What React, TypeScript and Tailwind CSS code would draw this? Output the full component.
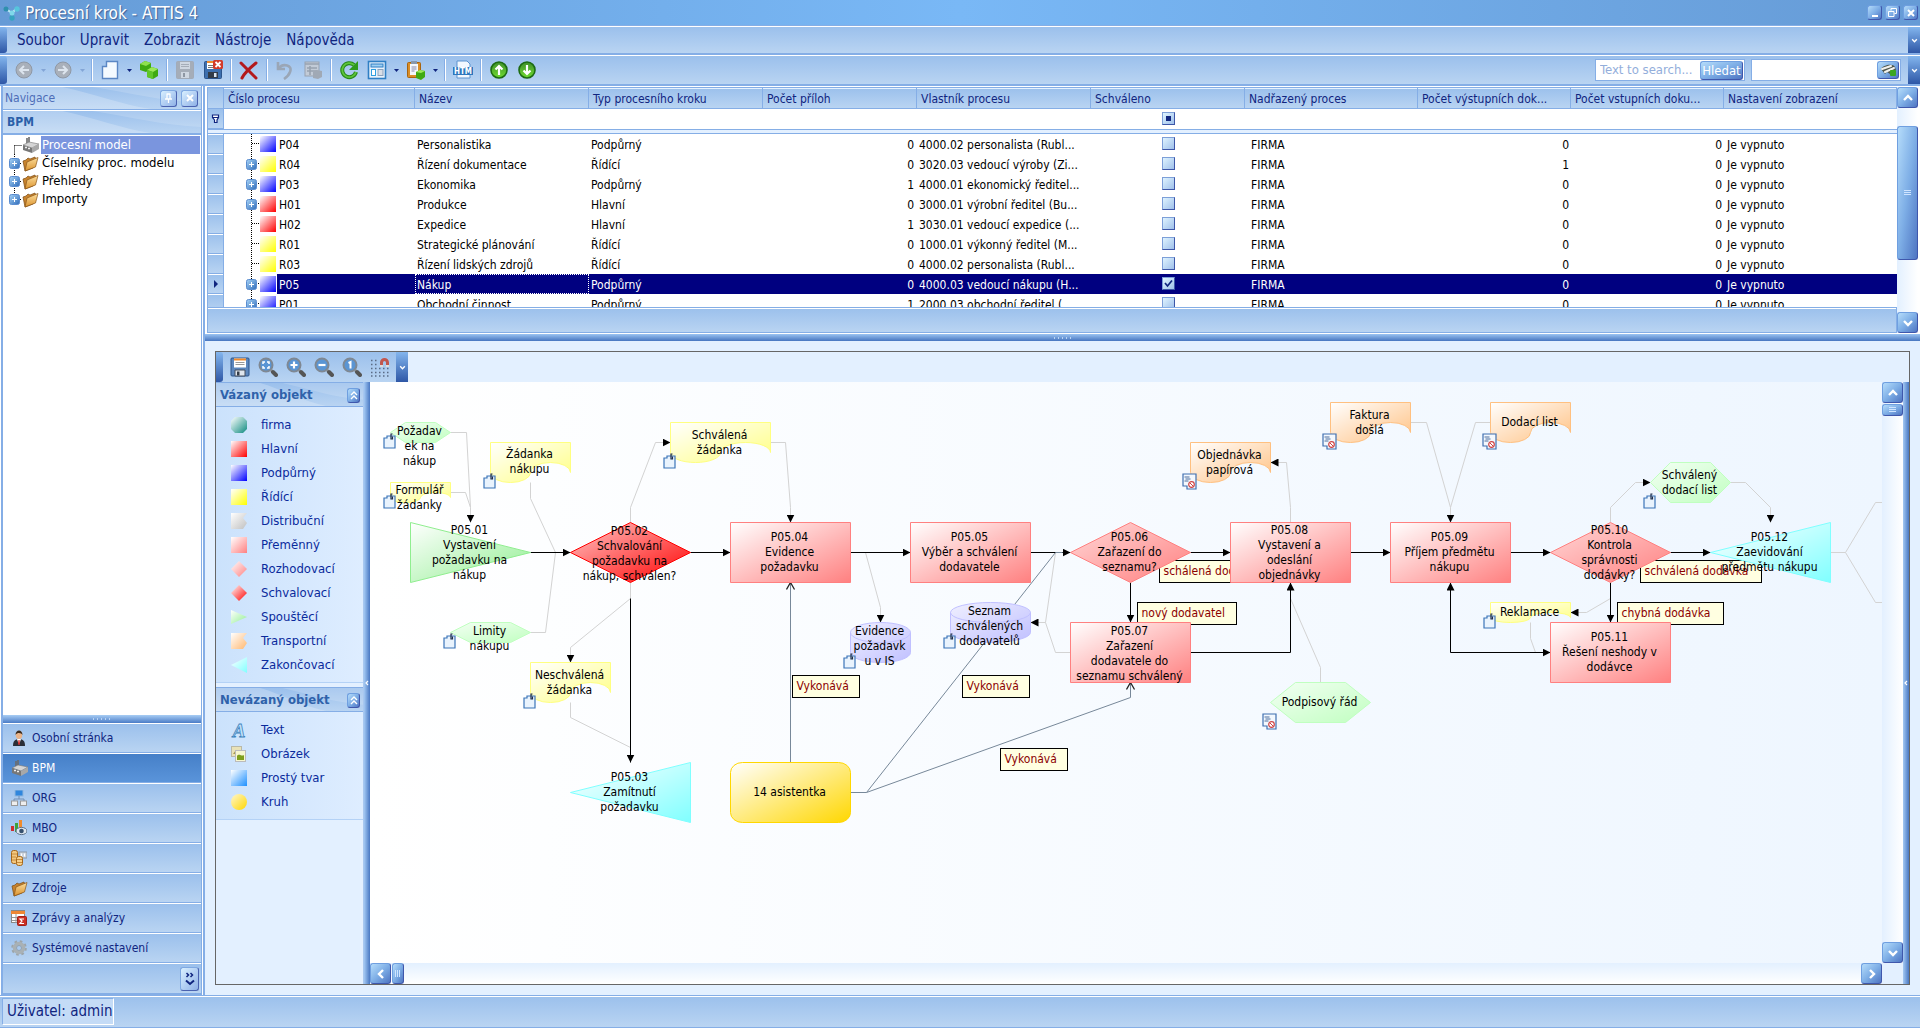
import React from 'react';

const processRows = [
  { code: 'P04', color: 'blue', name: 'Personalistika', type: 'Podpůrný', files: 0, owner: '4000.02 personalista (Rubl...', out: 0, leaf: true },
  { code: 'R04', color: 'yellow', name: 'Řízení dokumentace', type: 'Řídící', files: 0, owner: '3020.03 vedoucí výroby (Zi...', out: 1 },
  { code: 'P03', color: 'blue', name: 'Ekonomika', type: 'Podpůrný', files: 1, owner: '4000.01 ekonomický ředitel...', out: 0 },
  { code: 'H01', color: 'red', name: 'Produkce', type: 'Hlavní', files: 0, owner: '3000.01 výrobní ředitel (Bu...', out: 0 },
  { code: 'H02', color: 'red', name: 'Expedice', type: 'Hlavní', files: 1, owner: '3030.01 vedoucí expedice (...', out: 0, leaf: true },
  { code: 'R01', color: 'yellow', name: 'Strategické plánování', type: 'Řídící', files: 0, owner: '1000.01 výkonný ředitel (M...', out: 0, leaf: true },
  { code: 'R03', color: 'yellow', name: 'Řízení lidských zdrojů', type: 'Řídící', files: 0, owner: '4000.02 personalista (Rubl...', out: 0, leaf: true },
  { code: 'P05', color: 'blue', name: 'Nákup', type: 'Podpůrný', files: 0, owner: '4000.03 vedoucí nákupu (H...', out: 0, selected: true },
  { code: 'P01', color: 'blue', name: 'Obchodní činnost', type: 'Podpůrný', files: 1, owner: '2000.03 obchodní ředitel (...', out: 0 },
];

const swatches: Record<string, string> = {
  blue: 'bg-linear-to-br/srgb from-white to-[#0000ff]',
  yellow: 'bg-linear-to-br/srgb from-white to-[#ffff00]',
  red: 'bg-linear-to-br/srgb from-white to-[#ff0000]',
};

const columns = [
  { label: 'Číslo procesu', width: 'w-[191px]' },
  { label: 'Název', width: 'w-[174px]' },
  { label: 'Typ procesního kroku', width: 'w-[174px]' },
  { label: 'Počet příloh', width: 'w-[154px]' },
  { label: 'Vlastník procesu', width: 'w-[174px]' },
  { label: 'Schváleno', width: 'w-[154px]' },
  { label: 'Nadřazený proces', width: 'w-[173px]' },
  { label: 'Počet výstupních dok...', width: 'w-[153px]' },
  { label: 'Počet vstupních doku...', width: 'w-[153px]' },
  { label: 'Nastavení zobrazení', width: '' },
];

const bar = 'bg-linear-to-b from-[#9bc0ec] to-[#b9d4f2]';
const grip = 'bg-linear-to-b from-[#84b6ee] to-[#2f57a6]';
const bevel = 'rounded-[3px] border border-[#6f9fe0] border-r-[#3f57ac] border-b-[#3f57ac] bg-linear-to-br from-[#b5dcfa] via-[#7eaee6] to-[#4f75c2]';
const lightBevel = 'rounded-[3px] border border-[#7fa9e2] border-r-[#4a62b0] border-b-[#4a62b0] bg-linear-to-br from-[#d9f0ff] to-[#8fb0e6]';

/* ---------- small glyphs ---------- */

const chevrons = {
  up: 'M2 8l4-4 4 4',
  down: 'M2 4l4 4 4-4',
  left: 'M8 2L4 6l4 4',
  right: 'M4 2l4 4-4 4',
};

function Chevron({ dir, size = 12 }: { dir: keyof typeof chevrons; size?: number }) {
  return (
    <svg width={size} height={size} viewBox="0 0 12 12" fill="none" stroke="#fff" strokeWidth="2.4">
      <path d={chevrons[dir]} />
    </svg>
  );
}

function DoubleUp() {
  return (
    <svg width="10" height="11" viewBox="0 0 10 11" fill="none" stroke="#fff" strokeWidth="1.4">
      <path d="M2 5l3-3 3 3M2 9l3-3 3 3" />
    </svg>
  );
}

function Dots() {
  return (
    <svg width="20" height="4" viewBox="0 0 20 4" fill="#b9d4f4">
      <path d="M1 1h1v2h-1zM5 1h1v2h-1zM9 1h1v2h-1zM13 1h1v2h-1zM17 1h1v2h-1z" />
    </svg>
  );
}

function Plus() {
  return (
    <>
      <rect x="0.5" y="5.5" width="10" height="10" rx="2" fill="url(#plusFill)" stroke="#5b8dd0" />
      <path d="M3 10.5h5M5.5 8v5" stroke="#fff" />
    </>
  );
}

function Factory() {
  return (
    <svg width="18" height="18" viewBox="0 0 18 18">
      <path d="M5 2v6M7 1v6" stroke="#6b6b6b" strokeWidth="1.6" />
      <path d="M1 9l6-3 10 2-7 4z" fill="#d5d5d5" stroke="#777" strokeWidth=".6" />
      <path d="M1 9l9 3v5l-9-3z" fill="#777" />
      <path d="M10 12l7-4v5l-7 4z" fill="#a8a8a8" />
      <path d="M3 11.5h2M6 12.5h2" stroke="#eee" strokeWidth="1.4" />
    </svg>
  );
}

function Folder() {
  return (
    <svg width="17" height="17" viewBox="0 0 17 17">
      <path d="M1 6l3-1 2-2 2 1 5-2 1 3-3 8-8 3z" fill="#c7822c" stroke="#7a4a12" strokeWidth=".7" />
      <path d="M5 7l11-4.500-2.500 9.500-10.500 4z" fill="url(#folderFill)" stroke="#8a5517" strokeWidth=".7" />
    </svg>
  );
}

const toolIcons: Record<string, React.ReactNode> = {
  back: (
    <>
      <circle cx="10" cy="10" r="8" fill="#a9b0ba" stroke="#8f98a5" />
      <path d="M15 10H7M10 6l-4 4 4 4" fill="none" stroke="#dde5ee" strokeWidth="2" />
    </>
  ),
  forward: (
    <>
      <circle cx="10" cy="10" r="8" fill="#a9b0ba" stroke="#8f98a5" />
      <path d="M5 10h8M10 6l4 4-4 4" fill="none" stroke="#dde5ee" strokeWidth="2" />
    </>
  ),
  new: <path d="M6.500 1.500H17.500V18.500H2.500V6.500H6.500z" fill="#f4faff" stroke="#5b87c4" strokeWidth="1.4" />,
  cubes: (
    <>
      <path d="M1 4l5-3 6 2v6l-5 3-6-2z" fill="#3faa12" />
      <path d="M1 4l5-3 6 2-5 3z" fill="#8fe04e" />
      <path d="M8 10l5-3 6 2v7l-5 3-6-2z" fill="#3faa12" />
      <path d="M8 10l5-3 6 2-5 3z" fill="#9be85a" />
      <path d="M8 10l6 2v7l-6-2z" fill="#5fc62a" />
    </>
  ),
  saveOff: (
    <>
      <rect x="1.500" y="1.500" width="17" height="17" rx="1" fill="#a5adb8" stroke="#a2abb8" />
      <path d="M5 2h10v7H5zM6 12h8v6H6z" fill="#cfd7e1" />
      <path d="M6 4.500h8M6 6.500h8" stroke="#a5adb8" />
      <path d="M8 13h2v4h-2z" fill="#8e97a3" />
    </>
  ),
  saveDel: (
    <>
      <rect x="1.500" y="1.500" width="17" height="17" rx="1" fill="#3d6fae" stroke="#2c548b" />
      <path d="M4 2h8v7H4z" fill="#fff" />
      <path d="M4 2h8" stroke="#f08a2c" strokeWidth="2" />
      <path d="M5 5.500h5M5 7.500h5" stroke="#777" />
      <path d="M5 12h10v6H5z" fill="#333c48" />
      <path d="M11 13h2.500v4H11z" fill="#dbe5f0" />
      <rect x="10" y="0" width="10" height="9" rx="1.500" fill="#d23a2a" />
      <path d="M12.500 2l5 5M17.500 2l-5 5" stroke="#fff" strokeWidth="1.800" />
    </>
  ),
  remove: <path d="M2 3c3 3 9 9 15 15M17 3C12 7 6 12 3 18" fill="none" stroke="#b3191c" strokeWidth="3" strokeLinecap="round" />,
  undo: <path d="M3 2v7h7M4 8c4-5 14-3 11 4-1 3-3 5-6 7" fill="none" stroke="#9aa6b6" strokeWidth="2.600" />,
  tableOff: (
    <>
      <rect x="2" y="2" width="14" height="14" fill="#c2cbd7" stroke="#98a2b0" />
      <path d="M2 4h14M4 8h10M4 11h10M7 6v9" stroke="#98a2b0" strokeWidth="1.600" />
      <path d="M10 12l4-2 5 1v6l-4 2-5-1z" fill="#a0a9b5" />
    </>
  ),
  refresh: (
    <>
      <path d="M15 5A7 7 0 1 0 17 12" fill="none" stroke="#27891a" strokeWidth="4" />
      <path d="M15 5A7 7 0 1 0 17 12" fill="none" stroke="#5fc53a" strokeWidth="1.800" />
      <path d="M19 1v9h-9z" fill="#2f9a1e" />
    </>
  ),
  layout: (
    <>
      <rect x="1.500" y="1.500" width="17" height="17" fill="#e8f3fd" stroke="#2f7fc4" strokeWidth="1.600" />
      <rect x="4" y="4" width="12" height="3" fill="#9fd0f2" stroke="#2f7fc4" />
      <rect x="4.500" y="9.500" width="4" height="6" fill="#fff" stroke="#2f9fe0" />
      <rect x="11" y="9.500" width="5" height="6" fill="#d9dee6" stroke="#8da3bd" />
    </>
  ),
  paste: (
    <>
      <rect x="1.500" y="2.500" width="13" height="15" rx="1" fill="#d98d26" stroke="#a8640f" />
      <rect x="4" y="4" width="8" height="11" fill="#f4f8fc" />
      <path d="M5 1h6v3H5z" fill="#8898ac" />
      <path d="M5.500 7h5M5.500 9h5M5.500 11h3" stroke="#88a" />
      <path d="M10 12l4-2 5 1v6l-4 3-5-2z" fill="#3faa12" />
      <path d="M10 12l4-2 5 1-4 2z" fill="#9be85a" />
    </>
  ),
  htm: (
    <>
      <path d="M4 1h10l3 3v14H4z" fill="#f2f8ff" stroke="#5c93cf" />
      <rect x="0" y="7" width="20" height="8" fill="#2e77bd" />
      <text x="10" y="14" fontSize="8" fontWeight="700" textAnchor="middle" fill="#fff">HTM</text>
    </>
  ),
  up: (
    <>
      <circle cx="10" cy="10" r="8" fill="url(#greenBall)" stroke="#1c6b12" strokeWidth="1.600" />
      <path d="M10 15V7M6.500 9.500L10 6l3.500 3.500" fill="none" stroke="#fff" strokeWidth="2.200" />
    </>
  ),
  down: (
    <>
      <circle cx="10" cy="10" r="8" fill="url(#greenBall)" stroke="#1c6b12" strokeWidth="1.600" />
      <path d="M10 5v8M6.500 10.500L10 14l3.500-3.500" fill="none" stroke="#fff" strokeWidth="2.200" />
    </>
  ),
};

type Tool = { icon: string; label: string; menu?: boolean; menuOff?: boolean };

const toolGroups: Tool[][] = [
  [
    { icon: 'back', label: 'Zpět', menu: true, menuOff: true },
    { icon: 'forward', label: 'Vpřed', menu: true, menuOff: true },
  ],
  [
    { icon: 'new', label: 'Nový', menu: true },
    { icon: 'cubes', label: 'Objekty' },
  ],
  [
    { icon: 'saveOff', label: 'Uložit' },
    { icon: 'saveDel', label: 'Uložit a zavřít' },
  ],
  [{ icon: 'remove', label: 'Smazat' }],
  [
    { icon: 'undo', label: 'Vrátit' },
    { icon: 'tableOff', label: 'Tabulka' },
  ],
  [
    { icon: 'refresh', label: 'Obnovit' },
    { icon: 'layout', label: 'Rozložení', menu: true },
    { icon: 'paste', label: 'Vložit', menu: true },
  ],
  [{ icon: 'htm', label: 'Export HTM' }],
  [
    { icon: 'up', label: 'Nahoru' },
    { icon: 'down', label: 'Dolů' },
  ],
];

const navIcons: Record<string, React.ReactNode> = {
  person: (
    <>
      <path d="M2 16c0-5 2-7 6-7s6 2 6 7z" fill="#2b2f38" />
      <path d="M6 9l2 6 2-6z" fill="#fff" />
      <path d="M7.500 10h1l.5 4-1 1-1-1z" fill="#c22" />
      <ellipse cx="8" cy="5" rx="3.200" ry="4" fill="#e9b48a" />
      <path d="M4.500 5c0-6 7-6 7 0-1-2-5-3-7 0z" fill="#3a2a1c" />
    </>
  ),
  org: (
    <>
      <rect x="4" y="0" width="8" height="6" fill="#2f86dd" stroke="#8fb6dd" />
      <path d="M8 6v3M3 12V9h10v3" fill="none" stroke="#7390b5" />
      <rect x="0.500" y="11" width="6" height="4.500" fill="#eee" stroke="#999" />
      <rect x="9.500" y="11" width="6" height="4.500" fill="#eee" stroke="#999" />
    </>
  ),
  mbo: (
    <>
      <rect x="0" y="6" width="3" height="5" fill="#cf2e2e" />
      <rect x="4" y="3" width="3" height="9" fill="#3ea13c" />
      <rect x="8" y="0" width="3" height="8" fill="#f08b2c" />
      <ellipse cx="10.500" cy="11" rx="5.500" ry="3.600" fill="#dfe8f0" stroke="#5a6f88" />
      <circle cx="10.500" cy="11" r="2.300" fill="#35506e" />
    </>
  ),
  mot: (
    <>
      <rect x="0.500" y="0.500" width="6" height="13" rx="2" fill="#f3c77e" stroke="#a5671a" />
      <rect x="8" y="2" width="8" height="6" fill="#ccd4dd" stroke="#8b97a6" />
      <path d="M10.500 3.500v3M13.500 3.500v3" stroke="#fff" />
      <rect x="5.500" y="6.500" width="6" height="9" rx="2" fill="#f6cf8a" stroke="#a5671a" />
      <path d="M1 4h5M1 7h4M1 10h4M6 9.500h5M6 12.500h5" stroke="#c88c3c" />
    </>
  ),
  reports: (
    <>
      <rect x="0.500" y="0.500" width="13" height="12" fill="#fff" stroke="#888" />
      <path d="M0 1h14v3H0z" fill="#ee8735" />
      <path d="M1 7.500h12M1 10.500h12M5 4v9" stroke="#999" />
      <rect x="6.500" y="6.500" width="9" height="9" rx="1" fill="#cc2f23" stroke="#a12018" />
      <path d="M13 9H9l2 2-2 2.500h4" fill="none" stroke="#fff" strokeWidth="1.200" />
    </>
  ),
  gear: (
    <>
      <circle cx="8" cy="8" r="6.500" fill="none" stroke="#9da5aa" strokeWidth="2.600" strokeDasharray="2.500 2.600" />
      <circle cx="8" cy="8" r="4.500" fill="none" stroke="#a9b1b5" strokeWidth="3.500" />
      <circle cx="8" cy="8" r="2.500" fill="none" stroke="#8b949a" strokeWidth=".7" />
    </>
  ),
};

const navButtons = [
  { label: 'Osobní stránka', icon: 'person' },
  { label: 'BPM', icon: 'factory', active: true },
  { label: 'ORG', icon: 'org' },
  { label: 'MBO', icon: 'mbo' },
  { label: 'MOT', icon: 'mot' },
  { label: 'Zdroje', icon: 'folder' },
  { label: 'Zprávy a analýzy', icon: 'reports' },
  { label: 'Systémové nastavení', icon: 'gear' },
];

/* ---------- window chrome ---------- */

function TitleBar() {
  return (
    <header className="flex h-[25px] shrink-0 items-center bg-linear-to-r from-[#669bd6] via-[#79b8f6] to-[#669bd6] pr-[2px] pl-[3px]">
      <svg width="17" height="16" viewBox="0 0 17 16">
        <path d="M3 4l6 4 4-4M9 8v6" stroke="#bfeaf5" strokeWidth="2" fill="none" />
        <circle cx="3" cy="4" r="2.500" fill="#2f90ad" />
        <circle cx="14" cy="4" r="2.700" fill="#57c4dc" />
        <circle cx="9" cy="8" r="2.500" fill="#7fd8ea" />
        <circle cx="9" cy="13" r="2.700" fill="#37a3c0" />
      </svg>
      <h1 className="ml-[5px] text-[17px] leading-6 text-white [text-shadow:1px_1px_1px_#3c5f96]">Procesní krok - ATTIS 4</h1>
      <div className="ml-auto flex gap-[3px]">
        <button aria-label="Minimalizovat" className={`flex h-[15px] w-[15px] items-end justify-center pb-[2px] ${bevel}`}>
          <span className="h-[2px] w-[6px] bg-white" />
        </button>
        <button aria-label="Obnovit okno" className={`flex h-[15px] w-[15px] items-center justify-center ${bevel}`}>
          <svg width="9" height="9" viewBox="0 0 9 9" fill="none" stroke="#fff">
            <path d="M3 2.500v-2h5.500v5h-2M.500 3.500h5.500v5H.500z" />
          </svg>
        </button>
        <button aria-label="Zavřít" className={`flex h-[15px] w-[15px] items-center justify-center ${bevel}`}>
          <svg width="8" height="8" viewBox="0 0 8 8" stroke="#fff" strokeWidth="2">
            <path d="M1 1l6 6M7 1l-6 6" />
          </svg>
        </button>
      </div>
    </header>
  );
}

function EndCap() {
  return (
    <button aria-label="Možnosti panelu" className={`flex w-[12px] items-center justify-center ${grip}`}>
      <Chevron dir="down" size={7} />
    </button>
  );
}

function MenuBar() {
  return (
    <nav className="flex h-[29px] shrink-0 border-y border-[#85aee6]">
      <div className={`flex flex-1 border-t border-white ${bar}`}>
        <span className={`w-[7px] rounded-r-[3px] ${grip}`} />
        <div className="flex items-center gap-[15px] pt-px pl-[10px] text-[15px] text-[#10257f]">
          {['Soubor', 'Upravit', 'Zobrazit', 'Nástroje', 'Nápověda'].map((item) => (
            <button key={item}>{item}</button>
          ))}
        </div>
        <span className="flex-1" />
        <EndCap />
      </div>
    </nav>
  );
}

function Toolbar() {
  return (
    <div className="flex h-[32px] shrink-0 border-t border-b-2 border-[#85aee6]">
      <div className={`flex flex-1 items-stretch border-t border-white ${bar}`}>
        <span className={`mr-[3px] w-[7px] rounded-r-[3px] ${grip}`} />
        {toolGroups.map((group, i) => (
          <React.Fragment key={i}>
            {i > 0 && (
              <span className="flex w-2 justify-center py-[3px]">
                <span className="w-[2px] border-l border-[#85aee6] bg-white" />
              </span>
            )}
            {group.map((tool) => (
              <React.Fragment key={tool.icon}>
                <button aria-label={tool.label} className="flex w-[28px] items-center justify-center">
                  <svg width="20" height="20" viewBox="0 0 20 20">{toolIcons[tool.icon]}</svg>
                </button>
                {tool.menu && (
                  <button aria-label={`${tool.label} – nabídka`} className="flex w-[11px] items-center justify-center">
                    <svg width="5" height="3" viewBox="0 0 5 3" fill={tool.menuOff ? '#83a5d6' : '#10257f'}>
                      <path d="M0 0h5L2.500 3z" />
                    </svg>
                  </button>
                )}
              </React.Fragment>
            ))}
          </React.Fragment>
        ))}
        <div className="ml-auto flex items-center gap-[6px] pr-[7px]">
          <div className="flex h-[22px] w-[150px] items-center border border-[#85aee6] bg-white p-px">
            <input aria-label="Hledat text" placeholder="Text to search..." className="min-w-0 flex-1 pl-[3px] text-[13px] outline-none placeholder:text-[#93aedb]" />
            <button className={`h-[19px] w-[43px] text-[13px] leading-none text-white ${bevel}`}>Hledat</button>
          </div>
          <div className="flex h-[22px] w-[150px] items-center border border-[#85aee6] bg-white p-px">
            <input aria-label="Najít" className="min-w-0 flex-1 pl-[3px] text-[13px] outline-none" />
            <button aria-label="Najít objekt" className={`flex h-[18px] w-[22px] items-center justify-center ${bevel}`}>
              <svg width="17" height="13" viewBox="0 0 17 13">
                <path d="M1 5c2-4 12-6 14-2l1 3-6 4-3-2-2 2z" fill="#4f574c" />
                <path d="M2 5l9-3M5 8l9-4" stroke="#f2f2ee" strokeWidth="2" strokeLinecap="round" fill="none" />
                <rect x="10" y="6" width="6" height="6" rx="1" fill="#3aa521" />
              </svg>
            </button>
          </div>
        </div>
        <EndCap />
      </div>
    </div>
  );
}

function Swoosh() {
  return (
    <svg className="absolute inset-0 h-full w-full" viewBox="0 0 200 22" preserveAspectRatio="none">
      <path d="M0 0h60c30 6 60 18 90 22H0z" fill="#fff" fillOpacity=".22" />
      <path d="M90 0h110v16c-40-2-70-10-110-16z" fill="#fff" fillOpacity=".16" />
    </svg>
  );
}

/* ---------- navigation ---------- */

function Navigation() {
  return (
    <aside className="flex w-[205px] shrink-0 flex-col border-r-2 border-[#85aee6] bg-white pr-px pl-px">
      <div className="flex flex-1 flex-col border-l-2 border-r border-[#85aee6]">
        <div className={`relative mt-px flex h-[23px] items-center border-b border-[#85aee6] ${bar}`}>
          <Swoosh />
          <h2 className="relative pl-[2px] text-xs text-[#4d6db8]">Navigace</h2>
          <div className="relative ml-auto flex gap-[4px] pr-[3px]">
            <button aria-label="Připnout" className={`flex h-[17px] w-[17px] items-center justify-center ${lightBevel}`}>
              <svg width="9" height="10" viewBox="0 0 9 10" stroke="#fff" strokeWidth="1.300" fill="none">
                <path d="M2.500 1h4M3 1v5M6 1v5M1 6h7M4.500 6v4" />
              </svg>
            </button>
            <button aria-label="Zavřít panel" className={`flex h-[17px] w-[17px] items-center justify-center ${lightBevel}`}>
              <svg width="8" height="8" viewBox="0 0 8 8" stroke="#fff" strokeWidth="2">
                <path d="M1 1l6 6M7 1l-6 6" />
              </svg>
            </button>
          </div>
        </div>
        <div className={`relative flex h-[23px] items-center border-t border-white ${bar}`}>
          <Swoosh />
          <h3 className="relative pl-[4px] text-xs font-bold text-[#2a5fa8]">BPM</h3>
        </div>
        <ul className="flex-1 border-t-2 border-[#85aee6] px-px pt-px text-[13px] leading-[18px]">
          <li className="flex h-[18px] items-center pl-[5px]">
            <svg width="13" height="18" viewBox="0 0 13 18" className="shrink-0 overflow-visible">
              <path d="M5.500 9.500H13M5.500 9.500V18" fill="none" stroke="#000" strokeDasharray="1 1" />
            </svg>
            <Factory />
            <a href="#model" className="ml-px flex-1 bg-[#7a95de] pl-px text-white">Procesní model</a>
          </li>
          {['Číselníky proc. modelu', 'Přehledy', 'Importy'].map((item, i) => (
            <li key={item} className="flex h-[18px] items-center pl-[5px]">
              <button aria-label={`Rozbalit ${item}`}>
                <svg width="13" height="18" viewBox="0 0 13 18">
                  <path d={i < 2 ? 'M5.500 0v18M11 9.500h2' : 'M5.500 0v9M11 9.500h2'} stroke="#000" strokeDasharray="1 1" />
                  <g transform="translate(0 -1)"><Plus /></g>
                </svg>
              </button>
              <Folder />
              <a href={`#${i}`} className="ml-[3px]">{item}</a>
            </li>
          ))}
        </ul>
        <div className="flex h-2 items-center justify-center bg-linear-to-b from-[#a8cdf4] to-[#4b7cc6]">
          <Dots />
        </div>
        {navButtons.map((item) => (
          <button
            key={item.label}
            className={`flex h-[30px] items-center border-t border-b border-t-white border-b-[#85aee6] pl-2 text-xs ${
              item.active ? 'bg-linear-to-b from-[#4680c8] to-[#5a94da] text-white' : `text-[#10257f] ${bar}`
            }`}
          >
            <span className="flex w-[21px]">
              {item.icon === 'factory' && <Factory />}
              {item.icon === 'folder' && <Folder />}
              {navIcons[item.icon] && <svg width="16" height="16" viewBox="0 0 16 16">{navIcons[item.icon]}</svg>}
            </span>
            {item.label}
          </button>
        ))}
        <div className={`flex h-[32px] items-center justify-end border-t border-b-2 border-t-white border-b-[#85aee6] pr-[2px] ${bar}`}>
          <button aria-label="Další" className={`flex h-[24px] w-[19px] items-center justify-center ${lightBevel}`}>
            <svg width="10" height="14" viewBox="0 0 10 14" fill="none" stroke="#10257f" strokeWidth="1.500">
              <path d="M1.500 1l2 2-2 2M5.500 1l2 2-2 2" />
              <path d="M1 8.500l4 3.500 4-3.500" strokeWidth="2" />
            </svg>
          </button>
        </div>
      </div>
    </aside>
  );
}

/* ---------- process grid ---------- */

function GridCheck({ label, checked, mixed }: { label: string; checked?: boolean; mixed?: boolean }) {
  return (
    <label className="inline-grid place-items-center align-top">
      <input
        type="checkbox"
        aria-label={label}
        defaultChecked={checked}
        className="col-start-1 row-start-1 mt-[3px] h-[13px] w-[13px] appearance-none border border-[#7d9fd8] border-r-[#3d56a8] border-b-[#3d56a8] bg-linear-to-br from-[#dff4ff] to-[#9fc0ea]"
      />
      {checked && (
        <svg className="pointer-events-none col-start-1 row-start-1 mt-[3px]" width="9" height="9" viewBox="0 0 9 9" fill="none" stroke="#10257f" strokeWidth="1.700">
          <path d="M1 4l2.500 3L8 1.500" />
        </svg>
      )}
      {mixed && <span className="pointer-events-none col-start-1 row-start-1 mt-[3px] h-[5px] w-[5px] bg-[#10257f]" />}
    </label>
  );
}

function ProcessGrid() {
  return (
    <section className="flex h-[248px] shrink-0 border-b border-white bg-white pt-px pr-[2px] pl-[2px]">
      <div className="flex min-w-0 flex-1 flex-col border-l border-[#85aee6]">
        <div className="h-[220px] overflow-hidden">
          <table className="w-full table-fixed border-separate border-spacing-0 text-xs leading-[18px]">
            <thead>
              <tr>
                <th className={`h-[22px] w-[16px] border-y border-r border-[#85aee6] p-0 ${bar}`} />
                {columns.map((col) => (
                  <th
                    key={col.label}
                    className={`h-[22px] overflow-hidden border-y border-r border-[#85aee6] p-0 pt-[2px] pl-[4px] text-left font-normal whitespace-nowrap text-[#10257f] shadow-[inset_0_1px_#e4f1ff] ${bar} ${col.width}`}
                  >
                    {col.label}
                  </th>
                ))}
              </tr>
              <tr>
                <td className={`h-[20px] border-r border-b border-[#85aee6] p-0 ${bar}`}>
                  <svg width="9" height="10" viewBox="0 0 9 10" className="mx-auto" fill="#fff" stroke="#10257f" strokeWidth="1.200">
                    <path d="M1.500 1h6v2.500L6 6v2.500H3.500V6L1.500 3.500zM1.500 3.500h6" />
                  </svg>
                </td>
                <td colSpan={5} className="h-[20px] p-0" />
                <td className="h-[20px] p-0 text-center align-top leading-none">
                  <GridCheck label="Filtr schváleno" mixed />
                </td>
                <td colSpan={4} className="h-[20px] p-0" />
              </tr>
              <tr>
                <td colSpan={11} className="h-[5px] border-y border-[#85aee6] bg-[#e3f0ff] p-0" />
              </tr>
            </thead>
            <tbody>
              {processRows.map((row) => {
                const sel = row.selected ? 'bg-[#000080] text-white' : '';
                return (
                  <tr key={row.code}>
                    <td className={`h-5 border-r border-b border-[#85aee6] p-0 shadow-[inset_0_1px_#fff] ${bar}`}>
                      {row.selected && (
                        <svg width="4" height="8" viewBox="0 0 4 8" className="ml-[6px]" fill="#10257f">
                          <path d="M0 0l4 4-4 4z" />
                        </svg>
                      )}
                    </td>
                    <td className="h-5 p-0">
                      <div className="flex h-5 items-center pl-[22px]">
                        {row.leaf ? (
                          <svg width="14" height="20" viewBox="0 0 14 20">
                            <path d="M5.500 0v20M6 9.500h8" stroke="#000" strokeDasharray="1 1" />
                          </svg>
                        ) : (
                          <button aria-label={`Rozbalit ${row.code}`}>
                            <svg width="14" height="20" viewBox="0 0 14 20">
                              <path d="M5.500 0v20M12 9.500h2" stroke="#000" strokeDasharray="1 1" />
                              <Plus />
                            </svg>
                          </button>
                        )}
                        <span className={`h-4 w-4 ${swatches[row.color]}`} />
                        <span className={`ml-px flex-1 pt-[2px] pl-[2px] ${sel}`}>{row.code}</span>
                      </div>
                    </td>
                    <td className={`h-5 p-0 pt-[2px] pl-[2px] ${sel} ${row.selected ? 'outline-1 -outline-offset-1 outline-white outline-dotted' : ''}`}>{row.name}</td>
                    <td className={`h-5 p-0 pt-[2px] pl-[2px] ${sel}`}>{row.type}</td>
                    <td className={`h-5 p-0 pt-[2px] pr-[3px] text-right ${sel}`}>{row.files}</td>
                    <td className={`h-5 overflow-hidden p-0 pt-[2px] pl-[2px] whitespace-nowrap ${sel}`}>{row.owner}</td>
                    <td className={`h-5 p-0 text-center align-top leading-none ${sel}`}>
                      <GridCheck label={`Schváleno ${row.code}`} checked={row.selected} />
                    </td>
                    <td className={`h-5 p-0 pt-[2px] pl-[6px] ${sel}`}>FIRMA</td>
                    <td className={`h-5 p-0 pt-[2px] pr-[2px] text-right ${sel}`}>{row.out}</td>
                    <td className={`h-5 p-0 pt-[2px] pr-[2px] text-right ${sel}`}>0</td>
                    <td className={`h-5 p-0 pt-[2px] pl-[3px] ${sel}`}>Je vypnuto</td>
                  </tr>
                );
              })}
            </tbody>
          </table>
        </div>
        <div className={`flex-1 border-y border-r border-[#85aee6] shadow-[inset_0_1px_#fff] ${bar}`} />
      </div>
      <div className="flex w-[21px] flex-col bg-linear-to-r from-[#e3f0ff] to-white">
        <button aria-label="Posunout nahoru" className={`flex h-[21px] items-center justify-center ${bevel}`}>
          <Chevron dir="up" />
        </button>
        <div className={`mt-[18px] flex h-[134px] items-center justify-center ${bevel}`}>
          <svg width="7" height="6" viewBox="0 0 7 6" stroke="#cfe4ff">
            <path d="M0 .500h7M0 2.500h7M0 4.500h7" />
          </svg>
        </div>
        <button aria-label="Posunout dolů" className={`mt-auto flex h-[21px] items-center justify-center ${bevel}`}>
          <Chevron dir="down" />
        </button>
      </div>
    </section>
  );
}

/* ---------- shape palette ---------- */

const boundShapes = [
  { label: 'firma', fill: '#0f8b80', d: 'M4 0h8l4 4v8l-4 4H4l-4-4V4z' },
  { label: 'Hlavní', fill: '#ff0000', d: 'M0 0h16v16H0z' },
  { label: 'Podpůrný', fill: '#0000ff', d: 'M0 0h16v16H0z' },
  { label: 'Řídící', fill: '#ffff00', d: 'M0 0h16v16H0z' },
  { label: 'Distribuční', fill: '#c0c0c0', d: 'M0 0h16l-4 5 4 5-4 6H0z' },
  { label: 'Přeměnný', fill: '#ff8080', d: 'M0 0h16v16H0z' },
  { label: 'Rozhodovací', fill: '#ff8080', d: 'M8 0l8 8-8 8-8-8z' },
  { label: 'Schvalovací', fill: '#ff0000', d: 'M8 0l8 8-8 8-8-8z' },
  { label: 'Spouštěcí', fill: '#90ee90', d: 'M0 1l16 7-16 7z' },
  { label: 'Transportní', fill: '#ffb870', d: 'M0 0h16l-4 5 4 5-4 6H0z' },
  { label: 'Zakončovací', fill: '#80ffff', d: 'M16 0v16L0 8z' },
];

const freeShapes = ['Text', 'Obrázek', 'Prostý tvar', 'Kruh'];

function FreeIcon({ name }: { name: string }) {
  return (
    <svg width="16" height="16" viewBox="0 0 16 16">
      {name === 'Text' && (
        <text x="8" y="15" fontSize="19" fontWeight="700" fontStyle="italic" fontFamily="Liberation Serif, serif" textAnchor="middle" fill="#bfe2fa" stroke="#3f84bd" strokeWidth=".8">A</text>
      )}
      {name === 'Obrázek' && (
        <>
          <rect x="0.500" y="0.500" width="10" height="10" fill="#e9e2b8" stroke="#b9b9a8" />
          <path d="M2 8l3-4 4 4z" fill="#a79a4a" />
          <rect x="4.500" y="4.500" width="10" height="11" fill="#f7f7d0" stroke="#bbb" />
          <path d="M6 10c2-3 5 1 7-1v5H6z" fill="#7f9f1c" />
        </>
      )}
      {name === 'Prostý tvar' && <path d="M0 0h16v16H0z" fill="url(#pal-plain)" />}
      {name === 'Kruh' && <circle cx="8" cy="8" r="8" fill="url(#pal-circle)" />}
      <defs>
        <linearGradient id="pal-plain" x1="0" y1="0" x2="1" y2="1"><stop stopColor="#fff" /><stop offset="1" stopColor="#1e90ff" /></linearGradient>
        <linearGradient id="pal-circle" x1="0" y1="0" x2="1" y2="1"><stop stopColor="#fff7cf" /><stop offset="1" stopColor="#ffd700" /></linearGradient>
      </defs>
    </svg>
  );
}

function PaletteHead({ title }: { title: string }) {
  return (
    <div className={`relative flex h-[25px] items-center border-y border-[#85aee6] pt-px ${bar}`}>
      <Swoosh />
      <h3 className="relative pl-1 text-[13px] font-bold text-[#2f62aa]">{title}</h3>
      <button aria-label={`Sbalit ${title}`} className={`relative mr-[3px] ml-auto flex h-[15px] w-[13px] items-center justify-center ${bevel}`}>
        <DoubleUp />
      </button>
    </div>
  );
}

function Palette() {
  return (
    <div className="w-[148px] shrink-0 border-r border-[#a9c8f0] text-[13px] text-[#0a2a9c]">
      <PaletteHead title="Vázaný objekt" />
      <ul className="border-b border-[#b4d2f6] bg-linear-to-r from-[#cbe2fc] to-[#deedff] pt-[6px] pb-[5px]">
        {boundShapes.map((s, i) => (
          <li key={s.label} className="flex h-6 items-center pl-[15px]">
            <svg width="16" height="16" viewBox="0 0 16 16">
              <defs>
                <linearGradient id={`pal-${i}`} x1="0" y1="0" x2="1" y2="1"><stop stopColor="#fff" /><stop offset="1" stopColor={s.fill} /></linearGradient>
              </defs>
              <path d={s.d} fill={`url(#pal-${i})`} />
            </svg>
            <button className="ml-[14px]">{s.label}</button>
          </li>
        ))}
      </ul>
      <div className="h-1" />
      <PaletteHead title="Nevázaný objekt" />
      <ul className="border-b border-[#b4d2f6] bg-linear-to-r from-[#cbe2fc] to-[#deedff] pt-[6px] pb-[5px]">
        {freeShapes.map((name) => (
          <li key={name} className="flex h-6 items-center pl-[15px]">
            <FreeIcon name={name} />
            <button className="ml-[14px]">{name}</button>
          </li>
        ))}
      </ul>
    </div>
  );
}

/* ---------- diagram ---------- */

type Kind = 'rect' | 'diamond' | 'start' | 'end' | 'hex' | 'doc' | 'cyl' | 'round';
type Node = { kind: Kind; fill: string; x: number; y: number; w: number; h: number; lines: string[]; ty: number; attach?: 'clip' | 'link' };

const fills: Record<string, [string, string]> = {
  green: ['#ffffff', '#90ee90'],
  mint: ['#f4fff4', '#c0ffc0'],
  red: ['#ffc8c8', '#ff0000'],
  pink: ['#ffffff', '#ff8080'],
  blush: ['#ffd8d8', '#ff8080'],
  yellow: ['#ffffff', '#ffff80'],
  orange: ['#ffffff', '#ffc080'],
  lilac: ['#f0f0ff', '#c0c0ff'],
  cyan: ['#ffffff', '#80ffff'],
  gold: ['#ffffff', '#ffd700'],
};

// coordinates are on the canvas, which snaps to a 20px raster
const nodes: Node[] = [
  { kind: 'hex', fill: 'mint', x: 20, y: 40, w: 60, h: 20, lines: ['Požadav', 'ek na', 'nákup'], ty: 49, attach: 'clip' },
  { kind: 'doc', fill: 'yellow', x: 20, y: 100, w: 60, h: 20, lines: ['Formulář', 'žádanky'], ty: 108, attach: 'clip' },
  { kind: 'doc', fill: 'yellow', x: 120, y: 60, w: 80, h: 40, lines: ['Žádanka', 'nákupu'], ty: 72, attach: 'clip' },
  { kind: 'doc', fill: 'yellow', x: 300, y: 40, w: 100, h: 40, lines: ['Schválená', 'žádanka'], ty: 53, attach: 'clip' },
  { kind: 'hex', fill: 'mint', x: 80, y: 240, w: 80, h: 20, lines: ['Limity', 'nákupu'], ty: 249, attach: 'clip' },
  { kind: 'doc', fill: 'yellow', x: 160, y: 280, w: 80, h: 40, lines: ['Neschválená', 'žádanka'], ty: 293, attach: 'clip' },
  { kind: 'start', fill: 'green', x: 40, y: 140, w: 120, h: 60, lines: ['P05.01', 'Vystavení', 'požadavku na', 'nákup'], ty: 148 },
  { kind: 'diamond', fill: 'red', x: 200, y: 140, w: 120, h: 60, lines: ['P05.02', 'Schvalování', 'požadavku na', 'nákup, schválen?'], ty: 149 },
  { kind: 'end', fill: 'cyan', x: 200, y: 380, w: 120, h: 60, lines: ['P05.03', 'Zamítnutí', 'požadavku'], ty: 395 },
  { kind: 'rect', fill: 'pink', x: 360, y: 140, w: 120, h: 60, lines: ['P05.04', 'Evidence', 'požadavku'], ty: 155 },
  { kind: 'round', fill: 'gold', x: 360, y: 380, w: 120, h: 60, lines: ['14 asistentka'], ty: 410 },
  { kind: 'cyl', fill: 'lilac', x: 480, y: 240, w: 60, h: 40, lines: ['Evidence', 'požadavk', 'u v IS'], ty: 249, attach: 'clip' },
  { kind: 'rect', fill: 'pink', x: 540, y: 140, w: 120, h: 60, lines: ['P05.05', 'Výběr a schválení', 'dodavatele'], ty: 155 },
  { kind: 'cyl', fill: 'lilac', x: 580, y: 220, w: 80, h: 40, lines: ['Seznam', 'schválených', 'dodavatelů'], ty: 229, attach: 'clip' },
  { kind: 'diamond', fill: 'blush', x: 700, y: 140, w: 120, h: 60, lines: ['P05.06', 'Zařazení do', 'seznamu?'], ty: 155 },
  { kind: 'rect', fill: 'pink', x: 700, y: 240, w: 120, h: 60, lines: ['P05.07', 'Zařazení', 'dodavatele do', 'seznamu schválený'], ty: 249 },
  { kind: 'rect', fill: 'pink', x: 860, y: 140, w: 120, h: 60, lines: ['P05.08', 'Vystavení a', 'odeslání', 'objednávky'], ty: 148 },
  { kind: 'doc', fill: 'orange', x: 820, y: 60, w: 80, h: 40, lines: ['Objednávka', 'papírová'], ty: 73, attach: 'link' },
  { kind: 'doc', fill: 'orange', x: 960, y: 20, w: 80, h: 40, lines: ['Faktura', 'došlá'], ty: 33, attach: 'link' },
  { kind: 'doc', fill: 'orange', x: 1120, y: 20, w: 80, h: 40, lines: ['Dodací list'], ty: 40, attach: 'link' },
  { kind: 'hex', fill: 'mint', x: 900, y: 300, w: 100, h: 40, lines: ['Podpisový řád'], ty: 320, attach: 'link' },
  { kind: 'rect', fill: 'pink', x: 1020, y: 140, w: 120, h: 60, lines: ['P05.09', 'Příjem předmětu', 'nákupu'], ty: 155 },
  { kind: 'diamond', fill: 'blush', x: 1180, y: 140, w: 120, h: 60, lines: ['P05.10', 'Kontrola', 'správnosti', 'dodávky?'], ty: 148 },
  { kind: 'hex', fill: 'mint', x: 1280, y: 80, w: 80, h: 40, lines: ['Schválený', 'dodací list'], ty: 93, attach: 'clip' },
  { kind: 'doc', fill: 'yellow', x: 1120, y: 220, w: 80, h: 20, lines: ['Reklamace'], ty: 230, attach: 'clip' },
  { kind: 'rect', fill: 'pink', x: 1180, y: 240, w: 120, h: 60, lines: ['P05.11', 'Řešení neshody v', 'dodávce'], ty: 255 },
  { kind: 'end', fill: 'cyan', x: 1340, y: 140, w: 120, h: 60, lines: ['P05.12', 'Zaevidování', 'předmětu nákupu'], ty: 155 },
];

const greyLines = [
  '160,100 160,116 185,170', '160,250 175,250 185,170', '80,110 95,110 100,125',
  '200,320 200,335 260,365', '675,240 685,270 700,270', '920,200 920,216 950,285 950,300',
  '1120,40 1105,40 1080,125', '1160,240 1160,256 1165,270', '260,200 260,216',
  '1460,170 1475,170 1505,120 1513,120', '1475,170 1505,220 1513,220',
];
const greyArrows = [
  '80,50 96,50 100,125 100,140', '260,140 260,125 285,60 300,60', '400,60 415,60 420,125 420,140',
  '260,216 200,265 200,280', '495,170 510,225 510,240', '685,170 675,240 660,240',
  '920,140 920,125 916,80 900,80', '1040,40 1056,40 1080,125 1080,140', '1240,216 1216,230 1200,230',
  '1240,140 1240,125 1265,100 1280,100', '1360,100 1375,100 1400,125 1400,140',
];
const blackArrows = [
  '160,170 200,170', '320,170 360,170', '260,216 260,380', '480,170 540,170', '660,170 700,170',
  '760,200 760,240', '820,170 860,170', '820,270 920,270 920,200', '980,170 1020,170',
  '1140,170 1180,170', '1300,170 1340,170', '1240,200 1240,240',
];
const slateArrows = ['420,380 420,200', '480,410 496,410 760,315 760,300'];

const tags = [
  { x: 422, y: 293, w: 67, text: 'Vykonává' },
  { x: 592, y: 293, w: 67, text: 'Vykonává' },
  { x: 630, y: 366, w: 67, text: 'Vykonává' },
  { x: 767, y: 220, w: 99, text: 'nový dodavatel' },
  { x: 789, y: 178, w: 120, text: 'schálená dodávka' },
  { x: 1270, y: 178, w: 121, text: 'schválená dodávka' },
  { x: 1247, y: 220, w: 106, text: 'chybná dodávka' },
];

function shapePath({ kind, x, y, w, h }: Node) {
  const r = x + w;
  const b = y + h;
  const cx = x + w / 2;
  const cy = y + h / 2;
  const q = w / 4;
  switch (kind) {
    case 'diamond':
      return `M${cx} ${y}L${r} ${cy}L${cx} ${b}L${x} ${cy}Z`;
    case 'start':
      return `M${x} ${y}L${r} ${cy}L${x} ${b}Z`;
    case 'end':
      return `M${r} ${y}V${b}L${x} ${cy}Z`;
    case 'hex':
      return `M${x + q} ${y}H${r - q}L${r} ${cy}L${r - q} ${b}H${x + q}L${x} ${cy}Z`;
    case 'doc':
      return `M${x} ${y}H${r}V${y + h * 0.75}A${q} ${h / 4} 0 0 0 ${cx} ${y + h * 0.75}A${q} ${h / 4} 0 0 1 ${x} ${y + h * 0.75}Z`;
    case 'cyl':
      return `M${x} ${y + 10}A${w / 2} 10 0 0 1 ${r} ${y + 10}V${b - 10}A${w / 2} 10 0 0 1 ${x} ${b - 10}Z`;
    case 'round':
      return `M${x + 12} ${y}H${r - 12}A12 10 0 0 1 ${r} ${y + 10}V${b - 10}A12 10 0 0 1 ${r - 12} ${b}H${x + 12}A12 10 0 0 1 ${x} ${b - 10}V${y + 10}A12 10 0 0 1 ${x + 12} ${y}Z`;
    default:
      return `M${x} ${y}H${r}V${b}H${x}Z`;
  }
}

function Attachment({ type, x, y }: { type: 'clip' | 'link'; x: number; y: number }) {
  if (type === 'clip') {
    return (
      <g transform={`translate(${x - 7} ${y - 10})`}>
        <path d="M.5 5.500h3v-2h8v12H.5z" fill="#e9f3fd" stroke="#3b74b8" strokeWidth="1.200" />
        <path d="M9 1.500H7.500v5H9V4" fill="none" stroke="#1f2f4d" strokeWidth="1.200" />
      </g>
    );
  }
  return (
    <g transform={`translate(${x - 8} ${y - 9})`}>
      <path d="M.5.500h13v15h-9v-3h-4z" fill="#f3f8fe" stroke="#3f6fb0" strokeWidth="1.200" />
      <path d="M2 3.500h5M3 5.500h5M2 7.500h4" stroke="#4a6d9c" />
      <circle cx="9" cy="11" r="2.800" fill="#fff" stroke="#d04343" strokeWidth="1.200" />
      <path d="M7.500 9.500l3 3" stroke="#d04343" />
    </g>
  );
}

function Diagram() {
  return (
    <svg className="absolute inset-0 h-full w-full" role="img" aria-label="Diagram procesu Nákup">
      <defs>
        {Object.entries(fills).map(([name, [from, to]]) => (
          <linearGradient key={name} id={`node-${name}`} x1="0" y1="0" x2="1" y2="1">
            <stop stopColor={from} />
            <stop offset="1" stopColor={to} />
          </linearGradient>
        ))}
        <marker id="solid" viewBox="0 0 8 8" refX="8" refY="4" markerWidth="8" markerHeight="8" markerUnits="userSpaceOnUse" orient="auto-start-reverse">
          <path d="M0 0l8 4-8 4z" />
        </marker>
        <marker id="open" viewBox="0 0 9 10" refX="8" refY="5" markerWidth="9" markerHeight="10" markerUnits="userSpaceOnUse" orient="auto">
          <path d="M1 1l7 4-7 4" fill="none" stroke="#222" strokeWidth="1.300" />
        </marker>
      </defs>
      <g transform="translate(.5 .5)">
        <g fill="none" stroke="#d3d3d3">
          {greyLines.map((p) => <polyline key={p} points={p} />)}
          {greyArrows.map((p) => <polyline key={p} points={p} markerEnd="url(#solid)" />)}
        </g>
        <g fill="none" stroke="#000">
          {blackArrows.map((p) => <polyline key={p} points={p} markerEnd="url(#solid)" />)}
          <polyline points="1080,200 1080,270 1180,270" markerStart="url(#solid)" markerEnd="url(#solid)" />
        </g>
        <g fill="none" stroke="#778899">
          <polyline points="496,410 685,170 692,170" />
          {slateArrows.map((p) => <polyline key={p} points={p} markerEnd="url(#open)" />)}
        </g>
        {tags.map((t) => (
          <g key={`${t.x}-${t.y}`}>
            <rect x={t.x} y={t.y} width={t.w} height="22" fill="#ffffe1" stroke="#000" />
            <text x={t.x + 4} y={t.y + 14} fill="#8b0000">{t.text}</text>
          </g>
        ))}
        {nodes.map((n) => (
          <g key={n.lines.join()}>
            <path d={shapePath(n)} fill={`url(#node-${n.fill})`} stroke={fills[n.fill][1]} />
            {n.kind === 'cyl' && <path d={`M${n.x} ${n.y + 10}A${n.w / 2} 10 0 0 0 ${n.x + n.w} ${n.y + 10}`} fill="none" stroke="#c0c0ff" />}
            {n.attach && <Attachment type={n.attach} x={n.x} y={n.y + n.h} />}
            <text textAnchor="middle">
              {n.lines.map((line, i) => (
                <tspan key={line} x={n.x + n.w / 2 - 1} y={n.ty + 3 + i * 15}>{line}</tspan>
              ))}
            </text>
          </g>
        ))}
      </g>
    </svg>
  );
}

const lensMarks: Record<string, React.ReactNode> = {
  'Přizpůsobit': <path d="M5 7V5h2M9 5h2v2M11 9v2H9M7 11H5V9" fill="none" stroke="#fff" strokeWidth="1.500" />,
  'Přiblížit': <path d="M8 4.500v7M4.500 8h7" stroke="#fff" strokeWidth="2.200" />,
  'Oddálit': <path d="M4.500 8h7" stroke="#fff" strokeWidth="2.200" />,
  '1:1': <path d="M6.500 6L8.500 5v6.500" fill="none" stroke="#fff" strokeWidth="2" />,
};

function DiagramToolbar() {
  return (
    <div className={`flex h-[30px] w-[192px] items-stretch ${bar}`}>
      <span className={`mr-[3px] w-[7px] rounded-r-[3px] ${grip}`} />
      <button aria-label="Uložit diagram" className="flex w-7 items-center justify-center">
        <svg width="20" height="20" viewBox="0 0 20 20">
          <rect x="1" y="1" width="18" height="18" rx="1" fill="#5b86bd" stroke="#2c548b" />
          <path d="M4 1.500h12v9H4z" fill="#fff" />
          <path d="M4 1.500h12v2H4z" fill="#f08a2c" />
          <path d="M5.500 5.500h9M5.500 7.500h9" stroke="#999" />
          <path d="M5 13h10v6H5z" fill="#dfe6ee" stroke="#444f5e" />
          <path d="M7 14.500h2.500v4H7z" fill="#333c48" />
        </svg>
      </button>
      {Object.entries(lensMarks).map(([label, mark]) => (
        <button key={label} aria-label={label} className="flex w-7 items-center justify-center">
          <svg width="20" height="20" viewBox="0 0 20 20">
            <path d="M13 13l1 1" stroke="#9a9a9a" strokeWidth="3" />
            <path d="M15 15l3 3" stroke="#555" strokeWidth="4" strokeLinecap="round" />
            <circle cx="8" cy="8" r="6.500" fill="#5a95d4" stroke="#7f8893" strokeWidth="2" />
            {mark}
          </svg>
        </button>
      ))}
      <button aria-label="Přichytit k mřížce" className="flex w-7 items-center justify-center">
        <svg width="20" height="20" viewBox="0 0 20 20">
          <path d="M1 3.500h8M1 7.500h8M1 11.500h18M1 15.500h18M1 19h18" stroke="#5a6b85" strokeWidth="1.500" strokeDasharray="1.500 2.500" />
          <path d="M11.500 8V5.500a3 3 0 0 1 6 0V8" fill="none" stroke="#c2564e" strokeWidth="3" />
          <path d="M10 9h3M16 9h3" stroke="#ddd" strokeWidth="2" />
        </svg>
      </button>
      <span className="flex-1" />
      <EndCap />
    </div>
  );
}

function DiagramPanel() {
  return (
    <section className="flex min-h-0 flex-1 flex-col border border-[#666] bg-[#e3f0ff]">
      <DiagramToolbar />
      <div className="flex min-h-0 flex-1">
        <Palette />
        <div className="flex w-[6px] items-center bg-linear-to-r from-[#a4c9f3] to-[#4a78c2]">
          <Chevron dir="left" size={6} />
        </div>
        <div className="grid min-w-0 flex-1 grid-cols-[minmax(0,1fr)_21px] grid-rows-[minmax(0,1fr)_21px]">
          <div className="relative overflow-hidden bg-linear-to-r from-white to-[#eef6ff]">
            <Diagram />
          </div>
          <div className="flex flex-col bg-linear-to-r from-[#e3f0ff] to-white">
            <button aria-label="Diagram nahoru" className={`flex h-[21px] items-center justify-center ${bevel}`}>
              <Chevron dir="up" />
            </button>
            <div className={`mt-px flex h-3 items-center justify-center ${bevel}`}>
              <svg width="7" height="6" viewBox="0 0 7 6" stroke="#cfe4ff"><path d="M0 .500h7M0 2.500h7M0 4.500h7" /></svg>
            </div>
            <button aria-label="Diagram dolů" className={`mt-auto flex h-[21px] items-center justify-center ${bevel}`}>
              <Chevron dir="down" />
            </button>
          </div>
          <div className="flex bg-linear-to-b from-[#e3f0ff] to-white">
            <button aria-label="Diagram vlevo" className={`flex w-[21px] items-center justify-center ${bevel}`}>
              <Chevron dir="left" />
            </button>
            <div className={`ml-px flex w-3 items-center justify-center ${bevel}`}>
              <svg width="6" height="7" viewBox="0 0 6 7" stroke="#cfe4ff"><path d="M.500 0v7M2.500 0v7M4.500 0v7" /></svg>
            </div>
            <button aria-label="Diagram vpravo" className={`ml-auto flex w-[21px] items-center justify-center ${bevel}`}>
              <Chevron dir="right" />
            </button>
          </div>
          <div />
        </div>
        <div className="flex w-[6px] items-center bg-linear-to-r from-[#a4c9f3] to-[#4a78c2]">
          <Chevron dir="left" size={6} />
        </div>
      </div>
    </section>
  );
}

export default function App() {
  return (
    <div className="flex h-screen flex-col overflow-hidden bg-[#e3f0ff] font-['DejaVu_Sans_Condensed','DejaVu_Sans',sans-serif] text-xs text-black">
      <svg width="0" height="0" className="absolute">
        <defs>
          <linearGradient id="plusFill" x1="0" y1="0" x2="1" y2="1"><stop stopColor="#a8d4f7" /><stop offset="1" stopColor="#2f6cba" /></linearGradient>
          <linearGradient id="folderFill" x1="0" y1="0" x2="0" y2="1"><stop stopColor="#fbdc9a" /><stop offset="1" stopColor="#dc942f" /></linearGradient>
          <linearGradient id="greenBall" x1="0" y1="0" x2="0" y2="1"><stop stopColor="#3f8f2a" /><stop offset="1" stopColor="#6fdc30" /></linearGradient>
        </defs>
      </svg>
      <TitleBar />
      <MenuBar />
      <Toolbar />
      <main className="flex min-h-0 flex-1">
        <Navigation />
        <div className="flex min-w-0 flex-1 flex-col">
          <ProcessGrid />
          <div className="flex h-[7px] shrink-0 items-center justify-center bg-linear-to-b from-[#9cc4f2] to-[#4876c0]">
            <Dots />
          </div>
          <div className="flex min-h-0 flex-1 flex-col p-[10px]">
            <DiagramPanel />
          </div>
        </div>
      </main>
      <footer className={`flex h-[33px] shrink-0 items-center border-y border-[#85aee6] shadow-[inset_0_1px_#fff] ${bar}`}>
        <p className="ml-[2px] flex h-[27px] w-[112px] items-center border border-[#85aee6] border-r-white border-b-white bg-[#c4dbf6] pl-1 text-[15px] whitespace-nowrap text-[#10257f]">Uživatel: admin</p>
      </footer>
    </div>
  );
}
